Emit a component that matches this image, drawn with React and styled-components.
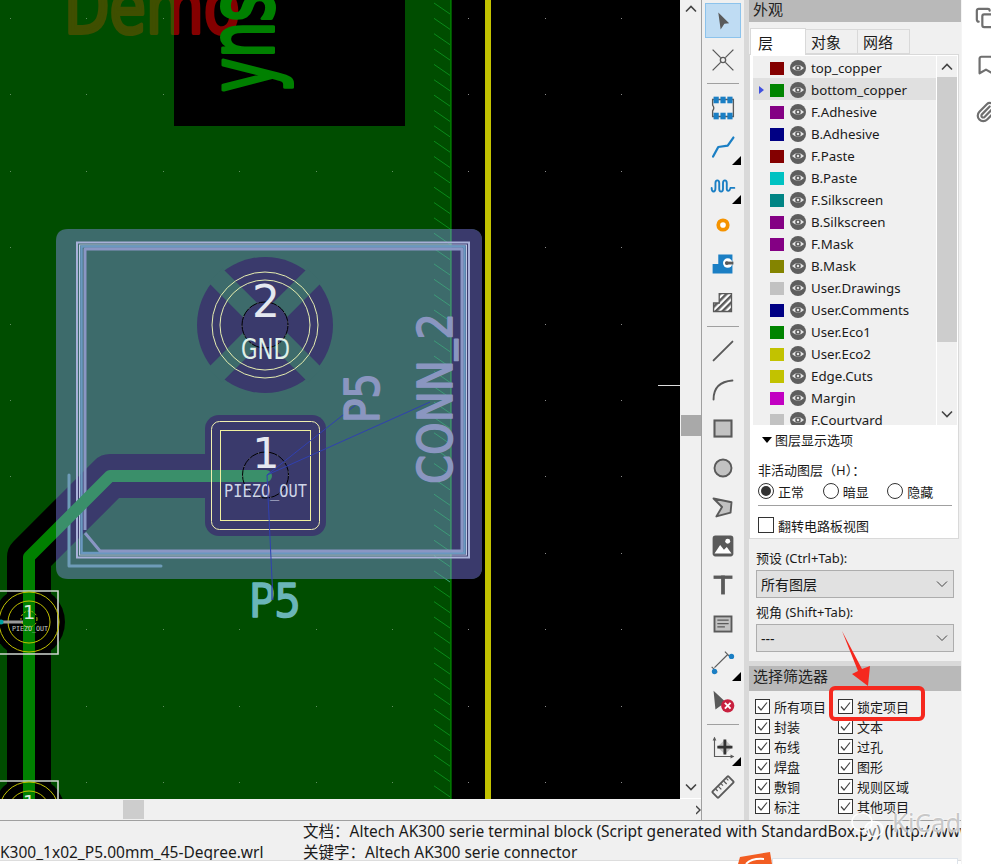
import React from 'react';
import styled, { createGlobalStyle } from 'styled-components';
import { Copy, Bookmark, Paperclip } from 'lucide-react';

const GlobalStyle = createGlobalStyle`
  html, body { margin: 0; padding: 0; background: #fff; }
  body { font-family: "Noto Sans", "Noto Sans CJK SC", sans-serif; color: #1a1a1a; }
`;

const Page = styled.div`
  position: relative;
  display: flex;
  width: 991px;
  height: 864px;
  overflow: hidden;
  background: #fff;
`;

const Main = styled.div`
  display: flex;
  flex-direction: column;
  width: 961px;
`;

const Workspace = styled.div`
  display: flex;
  height: 820px;
  background: #f0f0f0;
`;

const CanvasColumn = styled.div`
  display: flex;
  flex-direction: column;
  width: 701px;
`;

const CanvasRow = styled.div`
  display: flex;
  height: 799px;
`;

const Board = styled.svg`
  display: block;
  width: 680px;
  height: 799px;
`;

const BoardText = styled.text`
  font-family: "DejaVu Sans", sans-serif;
  stroke-linejoin: round;
`;

const BoardMono = styled.text`
  font-family: "DejaVu Sans Mono", monospace;
`;

const VScroll = styled.div`
  display: flex;
  flex-direction: column;
  align-items: center;
  width: 21px;
  background: #f0f0f0;
  border-bottom: 1px solid #fff;
`;

const ScrollArrow = styled.svg`
  display: block;
  flex: none;
  width: 12px;
  height: 8px;
  margin: ${p => p.$margin};
`;

const VThumb = styled.div`
  width: 20px;
  height: 21px;
  margin-top: 402px;
  margin-bottom: auto;
  background: #a9a9a9;
`;

const HScroll = styled.div`
  display: flex;
  align-items: center;
  justify-content: space-between;
  height: 21px;
  padding-left: 123px;
  box-sizing: border-box;
`;

const HThumb = styled.div`
  width: 21px;
  height: 19px;
  background: #cdcdcd;
`;

const SideArrow = styled.svg`
  display: block;
  width: 5px;
  height: 10px;
`;

const Toolbar = styled.div`
  display: flex;
  flex-direction: column;
  align-items: center;
  width: 43px;
  padding-top: 1px;
  box-sizing: border-box;
  border-left: 1px solid #a0a0a0;
  background: #f0f0f0;
`;

const ToolButton = styled.div`
  position: relative;
  display: flex;
  align-items: center;
  justify-content: center;
  flex: none;
  width: 36px;
  height: ${p => (p.$active ? 35 : 39)}px;
  margin: ${p => (p.$active ? '2px 0' : '0')};
  box-sizing: border-box;
  background: ${p => (p.$active ? '#bfdcf3' : 'transparent')};
  border: 1px solid ${p => (p.$active ? '#8cc3ec' : 'transparent')};
`;

const CornerMark = styled.span`
  position: absolute;
  right: -1px;
  bottom: 0;
  width: 0;
  height: 0;
  border-style: solid;
  border-width: 0 0 9px 9px;
  border-color: transparent transparent #000 transparent;
`;

const ToolDivider = styled.div`
  flex: none;
  width: 32px;
  height: ${p => p.$space}px;
  display: flex;
  align-items: center;
  &::after { content: ''; width: 100%; height: 1px; background: #a0a0a0; }
`;

const Strip = styled.div`
  width: 5px;
  background: #d9d9d9;
`;

const Panel = styled.div`
  display: flex;
  flex-direction: column;
  width: 212px;
  background: #f0f0f0;
`;

const PanelHeader = styled.div`
  flex: none;
  height: ${p => p.$height}px;
  line-height: ${p => p.$height - 4}px;
  padding-left: 4px;
  background: #b9b9b9;
  font-size: 15px;
  color: #222;
`;

const Tabs = styled.div`
  display: flex;
  align-items: flex-end;
  height: 32px;
  padding-left: 1px;
`;

const Tab = styled.div`
  box-sizing: border-box;
  display: flex;
  align-items: center;
  height: ${p => (p.$active ? 27 : 25)}px;
  width: ${p => p.$width}px;
  padding-left: ${p => (p.$active ? 7 : 5)}px;
  margin-bottom: ${p => (p.$active ? -1 : 0)}px;
  background: ${p => (p.$active ? '#fff' : '#f0f0f0')};
  border: 1px solid #d9d9d9;
  border-bottom: ${p => (p.$active ? 'none' : '1px solid #d9d9d9')};
  border-left: ${p => (p.$first ? '1px solid #d9d9d9' : 'none')};
  font-size: 15px;
  position: relative;
  z-index: ${p => (p.$active ? 1 : 0)};
`;

const LayerBox = styled.div`
  box-sizing: border-box;
  width: 210px;
  height: 485px;
  background: #fff;
  border: 1px solid #d9d9d9;
  padding: 1px 0 0 3px;
`;

const ListWrap = styled.div`
  display: flex;
  height: 369px;
`;

const LayerList = styled.div`
  width: 183px;
  background: #f0f0f0;
  overflow: hidden;
`;

const LayerRow = styled.div`
  display: flex;
  align-items: center;
  box-sizing: border-box;
  height: 22px;
  padding: 2px 0 0 6px;
  background: ${p => (p.$current ? '#e0e0e0' : 'transparent')};
`;

const Marker = styled.span`
  flex: none;
  width: 0;
  height: 0;
  margin-right: 6px;
  border-style: solid;
  border-width: 4.5px 0 4.5px 5px;
  border-color: transparent transparent transparent ${p => (p.$on ? '#4050e0' : 'transparent')};
`;

const Swatch = styled.span`
  flex: none;
  width: 14px;
  height: 13px;
  margin-right: 6px;
  background: ${p => p.$color};
`;

const LayerName = styled.span`
  margin-left: 5px;
  font-size: 13.3px;
  white-space: nowrap;
`;

const ListScroll = styled.div`
  display: flex;
  flex-direction: column;
  align-items: center;
  width: 20px;
  margin-left: 1px;
  background: #f0f0f0;
`;

const ListThumb = styled.div`
  width: 100%;
  height: 265px;
  margin-top: 6px;
  margin-bottom: auto;
  background: #cdcdcd;
`;

const OptionsHead = styled.div`
  display: flex;
  align-items: center;
  height: 29px;
  padding-left: 9px;
  font-size: 13px;
`;

const DownMark = styled.span`
  width: 0;
  height: 0;
  margin-right: 3px;
  border-style: solid;
  border-width: 6px 5.5px 0 5.5px;
  border-color: #000 transparent transparent transparent;
`;

const Options = styled.div`
  padding: 6px 3px 0 5px;
  font-size: 13px;
`;

const OptionLabel = styled.div`
  height: 20px;
  line-height: 20px;
`;

const RadioRow = styled.div`
  display: flex;
  align-items: center;
  height: 26px;
  border-bottom: 1px solid #a0a0a0;
  margin-right: 3px;
  padding-bottom: 3px;
  box-sizing: border-box;
`;

const RadioItem = styled.label`
  display: flex;
  align-items: center;
  gap: 4px;
  width: 66px;
`;

const RadioDot = styled.span`
  box-sizing: border-box;
  display: flex;
  align-items: center;
  justify-content: center;
  width: 16px;
  height: 16px;
  border: 1px solid #333;
  border-radius: 50%;
  &::after {
    content: '';
    width: 10px;
    height: 10px;
    border-radius: 50%;
    background: ${p => (p.$on ? '#333' : 'transparent')};
  }
`;

const FlipRow = styled.div`
  display: flex;
  align-items: center;
  gap: 4px;
  height: 28px;
  margin-top: 5px;
`;

const EmptyBox = styled.span`
  box-sizing: border-box;
  width: 16px;
  height: 16px;
  border: 1px solid #333;
  background: #fff;
`;

const PresetBlock = styled.div`
  padding: 9px 7px 0 7px;
  font-size: 13px;
`;

const PresetLabel = styled.div`
  height: 22px;
  line-height: 20px;
`;

const Select = styled.div`
  box-sizing: border-box;
  display: flex;
  align-items: center;
  justify-content: space-between;
  height: 28px;
  margin-bottom: 4px;
  padding: 0 5px 0 4px;
  background: #e1e1e1;
  border: 1px solid #adadad;
  font-size: 14px;
`;

const FilterStrip = styled.div`
  height: 5px;
  margin-top: 5px;
  background: #d9d9d9;
`;

const FilterGrid = styled.div`
  display: grid;
  grid-template-columns: 83px 1fr;
  grid-auto-rows: 20px;
  padding: 5px 0 0 6px;
`;

const FilterItem = styled.div`
  display: flex;
  align-items: center;
  gap: 4px;
  font-size: 13px;
  white-space: nowrap;
`;

const CheckBox = styled.span`
  box-sizing: border-box;
  display: flex;
  align-items: center;
  justify-content: center;
  flex: none;
  width: 15px;
  height: 15px;
  border: 1px solid #333;
  background: #fff;
`;

const StatusBar = styled.div`
  display: grid;
  grid-template-columns: 303px 1fr;
  box-sizing: border-box;
  height: 41px;
  border-top: 1px solid #a0a0a0;
  border-bottom: 1px solid #ddd;
  background: #f0f0f0;
  font-size: 15.5px;
  overflow: hidden;
`;

const FileName = styled.div`
  margin-top: 21px;
  line-height: 21px;
  white-space: nowrap;
  overflow: hidden;
`;

const StatusInfo = styled.div`
  min-width: 0;
  overflow: hidden;
`;

const StatusLine = styled.div`
  height: 21px;
  line-height: 21px;
  white-space: nowrap;
`;

const Rail = styled.div`
  display: flex;
  flex-direction: column;
  width: 30px;
  padding: 7px 0 0 13px;
  box-sizing: border-box;
  gap: 25px;
  overflow: hidden;
  border-left: 1px solid #f4f4f4;
  color: #6f6f6f;
`;

const RedBox = styled.div`
  position: absolute;
  left: 829px;
  top: 686px;
  width: 96px;
  height: 35px;
  box-sizing: border-box;
  border: 4px solid #f5281e;
  border-radius: 6px;
`;

const Overlay = styled.svg`
  position: absolute;
  left: 0;
  top: 0;
  width: 991px;
  height: 864px;
  pointer-events: none;
`;

const Watermark = styled.span`
  position: absolute;
  left: 892px;
  top: 805px;
  font-family: "Noto Sans", sans-serif;
  font-size: 25px;
  line-height: 34px;
  letter-spacing: 0.5px;
  color: rgba(185, 185, 185, 0.8);
  text-shadow: 0 0 2px #fff, 0 0 2px #fff;
`;

const ShareBox = styled.div`
  position: absolute;
  left: 772px;
  top: 858px;
  width: 186px;
  height: 10px;
  box-sizing: border-box;
  border: 1px solid #dde3ea;
  background: #fff;
`;

const IC = ({ children }) => (
  <svg width="36" height="36" viewBox="0 0 36 36">{children}</svg>
);

const GREY = '#5a5a5a';
const BLUE = '#1b7fc4';

const icons = {
  select: <path d="M13 9 L24.5 20.5 L19.5 21 L15.5 27 Z" fill={GREY} />,
  cross: (
    <g stroke={GREY} strokeWidth="1.4" fill="none">
      <path d="M7 7 L15.5 15.5 M29 7 L20.5 15.5 M7 29 L15.5 20.5 M29 29 L20.5 20.5" />
      <circle cx="18" cy="18" r="2.8" />
    </g>
  ),
  footprint: (
    <g>
      <path d="M7 9 H29 V27 H7 V21 Q9.5 18 7 15 Z" fill="none" stroke={GREY} strokeWidth="1.4" />
      <g fill={BLUE}>
        <rect x="8" y="6" width="5.5" height="7" /><rect x="15.3" y="6" width="5.5" height="7" /><rect x="22.6" y="6" width="5.5" height="7" />
        <rect x="8" y="23" width="5.5" height="7" /><rect x="15.3" y="23" width="5.5" height="7" /><rect x="22.6" y="23" width="5.5" height="7" />
      </g>
    </g>
  ),
  route: <path d="M7.5 28 L13 18 L23 16.5 L29 8" fill="none" stroke={BLUE} strokeWidth="2.4" strokeLinecap="round" strokeLinejoin="round" />,
  meander: <path d="M6 20 C6 25 10 25 10 20 V15 C10 11 14 11 14 15 V21 C14 25 18 25 18 21 V15 C18 11 22 11 22 15 V21 C22 24 25 24 26 20 H30" fill="none" stroke={BLUE} strokeWidth="2" strokeLinecap="round" />,
  via: <circle cx="18" cy="18" r="5" fill="#fff" stroke="#f59300" strokeWidth="4" />,
  zone: (
    <g>
      <path d="M7 28 V18 H13 V8 H28 V28 Z" fill={BLUE} />
      <circle cx="23" cy="17" r="5" fill="#fff" />
      <rect x="21" y="15.5" width="8" height="3" fill={GREY} />
      <circle cx="22" cy="17" r="2" fill={GREY} />
    </g>
  ),
  hatch: (
    <g>
      <defs>
        <pattern id="stripe" width="5" height="5" patternUnits="userSpaceOnUse" patternTransform="rotate(45)">
          <rect width="5" height="5" fill="#fff" />
          <rect width="2.6" height="5" fill={GREY} />
        </pattern>
      </defs>
      <path d="M8 27 V18 H14 V8 H27 V27 Z" fill="url(#stripe)" stroke={GREY} strokeWidth="1.4" />
    </g>
  ),
  line: <path d="M8 28 L28 8" stroke={GREY} strokeWidth="2" strokeLinecap="round" />,
  arc: <path d="M8 28 C8 16 15 9 28 8" fill="none" stroke={GREY} strokeWidth="2" strokeLinecap="round" />,
  rect: <rect x="9" y="9" width="18" height="17" fill="#c2c2c2" stroke={GREY} strokeWidth="2.2" />,
  circle: <circle cx="18" cy="18" r="9" fill="#c2c2c2" stroke={GREY} strokeWidth="2" />,
  polygon: <path d="M8 9 L27 13 L26 24 L11 28 L17 18 Z" fill="#c2c2c2" stroke={GREY} strokeWidth="2" strokeLinejoin="round" />,
  image: (
    <g>
      <rect x="7" y="7" width="22" height="22" rx="3" fill={GREY} />
      <circle cx="23" cy="13" r="2.6" fill="#fff" />
      <path d="M9 26 L15 17 L19 22 L22 19 L27 26 Z" fill="#fff" />
    </g>
  ),
  type: (
    <g fill={GREY}>
      <rect x="8" y="8" width="20" height="3.5" />
      <rect x="16" y="8" width="4" height="20" />
    </g>
  ),
  note: (
    <g>
      <rect x="9" y="10" width="18" height="16" fill="#c2c2c2" stroke={GREY} strokeWidth="2" />
      <path d="M12 14 H24 M12 17.5 H24 M12 21 H20" stroke={GREY} strokeWidth="1.3" />
    </g>
  ),
  dimension: (
    <g>
      <path d="M9 23 L23 9" stroke={GREY} strokeWidth="1.2" />
      <path d="M6 22 L12 28 M20 6 L26 12" stroke={GREY} strokeWidth="1.2" />
      <circle cx="27" cy="11" r="2.8" fill={BLUE} />
      <circle cx="9" cy="27" r="2.8" fill={BLUE} />
    </g>
  ),
  remove: (
    <g>
      <path d="M8 6 L23 20 L17 21 L10 26 Z" fill={GREY} />
      <circle cx="23" cy="22" r="7" fill="#c8213f" />
      <path d="M20 19 L26 25 M26 19 L20 25" stroke="#fff" strokeWidth="2" />
    </g>
  ),
  origin: (
    <g>
      <path d="M9 7 V27 H29" fill="none" stroke={GREY} strokeWidth="1.2" />
      <path d="M7 10 L9 6 L11 10 Z M26 25 L30 27 L26 29 Z" fill={GREY} />
      <path d="M20 9 L28 17 L20 25 L12 17 Z" fill="#c2c2c2" />
      <path d="M18.5 9 H21.5 V15.5 H28 V18.5 H21.5 V25 H18.5 V18.5 H12 V15.5 H18.5 Z" fill="#333" />
    </g>
  ),
  ruler: (
    <g transform="rotate(-45 18 18)">
      <rect x="6" y="13.5" width="24" height="9" fill="none" stroke={GREY} strokeWidth="2" rx="1" />
      <path d="M11 14 V17 M15 14 V18.5 M19 14 V17 M23 14 V18.5 M27 14 V17" stroke={GREY} strokeWidth="1.3" />
    </g>
  ),
};

const tools = [
  { icon: 'select', active: true },
  { icon: 'cross' },
  { divider: 9 },
  { icon: 'footprint' },
  { icon: 'route', corner: true },
  { icon: 'meander', corner: true },
  { icon: 'via' },
  { icon: 'zone' },
  { icon: 'hatch' },
  { divider: 9 },
  { icon: 'line' },
  { icon: 'arc' },
  { icon: 'rect' },
  { icon: 'circle' },
  { icon: 'polygon' },
  { icon: 'image' },
  { icon: 'type' },
  { icon: 'note' },
  { icon: 'dimension', corner: true },
  { icon: 'remove' },
  { divider: 7 },
  { icon: 'origin', corner: true },
  { icon: 'ruler' },
];

const layers = [
  ['top_copper', '#840000'],
  ['bottom_copper', '#008400'],
  ['F.Adhesive', '#840084'],
  ['B.Adhesive', '#000084'],
  ['F.Paste', '#840000'],
  ['B.Paste', '#00c2c2'],
  ['F.Silkscreen', '#008484'],
  ['B.Silkscreen', '#840084'],
  ['F.Mask', '#840084'],
  ['B.Mask', '#848400'],
  ['User.Drawings', '#c2c2c2'],
  ['User.Comments', '#000084'],
  ['User.Eco1', '#008400'],
  ['User.Eco2', '#c2c200'],
  ['Edge.Cuts', '#c2c200'],
  ['Margin', '#c200c2'],
  ['F.Courtyard', '#c2c2c2'],
];

const filters = [
  '所有项目', '锁定项目',
  '封装', '文本',
  '布线', '过孔',
  '焊盘', '图形',
  '敷铜', '规则区域',
  '标注', '其他项目',
];

const Eye = () => (
  <svg width="16" height="16" viewBox="0 0 16 16" style={{ flex: 'none' }}>
    <circle cx="8" cy="8" r="8" fill="#5e5e5e" />
    <path d="M2 8 Q8 2.2 14 8 Q8 13.8 2 8 Z" fill="#e6e6e6" />
    <circle cx="8" cy="8" r="2.8" fill="#5e5e5e" />
    <circle cx="8" cy="8" r="1.2" fill="#e6e6e6" />
  </svg>
);

const Tick = () => (
  <svg width="13" height="13" viewBox="0 0 13 13">
    <path d="M2 6.5 L5 10 L11 2.5" fill="none" stroke="#444" strokeWidth="1.2" />
  </svg>
);

const Chevron = ({ up, margin, size = 1.6 }) => (
  <ScrollArrow viewBox="0 0 12 8" $margin={margin}>
    <path d={up ? 'M1 6.5 L6 1.5 L11 6.5' : 'M1 1.5 L6 6.5 L11 1.5'} fill="none" stroke="#444" strokeWidth={size} />
  </ScrollArrow>
);

const gridDots = [];
for (let x = 10; x < 680; x += 76.4) {
  for (let y = 18; y < 799; y += 76.4) {
    gridDots.push([Math.round(x), Math.round(y)]);
  }
}

const hatchLines = [];
for (let y = 3; y < 799; y += 15.35) hatchLines.push(y);

const TRACE = 'M266 476 H110 L29 557 V800';
const HIGHLIGHT = 'M68 229 H470 Q482 229 482 241 V567 Q482 579 470 579 H68 Q56 579 56 567 V241 Q56 229 68 229 Z';

const SmallPad = ({ cy, label }) => (
  <g>
    <circle cx="29" cy={cy} r="36" fill="#000" />
    <rect x="23" y={cy - 36} width="12" height="72" fill="#008000" />
    <path d={`M0 ${cy - 31} H58 V${cy + 32} H0`} fill="none" stroke="#cfd6cf" strokeWidth="1.6" />
    <circle cx="29" cy={cy} r="30" fill="none" stroke="#c2c200" strokeWidth="1" />
    <circle cx="29" cy={cy} r="21" fill="none" stroke="#c2c200" strokeWidth="1" />
    <path d={`M0 ${cy} H23`} stroke="#9a9a9a" strokeWidth="3" />
    <circle cx="1" cy={cy} r="2.5" fill="#00a0a0" />
    <circle cx="29" cy={cy - 3} r="8" fill="none" stroke="#c2c200" strokeWidth="1" strokeDasharray="2 2" />
    <BoardText x="29" y={cy - 3} fontSize="20" textAnchor="middle" fill="#d8e8d8">1</BoardText>
    {label && (
      <BoardMono x="12" y={cy + 9} fontSize="7" textLength="36" lengthAdjust="spacingAndGlyphs" fill="#c8d0c8">PIEZO_OUT</BoardMono>
    )}
  </g>
);

const PcbCanvas = () => (
  <Board viewBox="0 0 680 799">
    <defs>
      <clipPath id="blackRect"><rect x="174" y="0" width="231" height="126" /></clipPath>
      <clipPath id="highlight"><path d={HIGHLIGHT} /></clipPath>
      <clipPath id="outside"><path d={`M0 0 H680 V799 H0 Z ${HIGHLIGHT}`} clipRule="evenodd" /></clipPath>
    </defs>
    <rect width="680" height="799" fill="#004d00" />
    <rect x="451" width="229" height="799" fill="#000" />
    <rect x="485" width="6" height="799" fill="#c2c200" />
    <rect x="450.5" width="1" height="799" fill="#00a000" />
    {hatchLines.map(y => (
      <path key={y} d={`M434 ${y} L450 ${y + 11}`} stroke="#0a8a1a" strokeWidth="1" />
    ))}
    <rect x="174" width="231" height="126" fill="#000" />
    {gridDots.map(([x, y]) => (
      <rect key={`${x}-${y}`} x={x} y={y} width="1" height="1" fill={x > 451 ? '#8a8a8a' : '#5f8f5f'} />
    ))}

    <BoardText x="64" y="33" fontSize="74" textLength="176" lengthAdjust="spacingAndGlyphs" fill="#3f4f00" stroke="#3f4f00" strokeWidth="4">Demo</BoardText>
    <g clipPath="url(#blackRect)">
      <rect x="174" width="231" height="126" fill="#000" />
      <BoardText x="64" y="33" fontSize="74" textLength="176" lengthAdjust="spacingAndGlyphs" fill="#840000" stroke="#840000" strokeWidth="4">Demo</BoardText>
    </g>
    <BoardText transform="translate(273 92) rotate(-90)" fontSize="91" textLength="100" lengthAdjust="spacingAndGlyphs" fill="#008000" stroke="#008000" strokeWidth="4">yns</BoardText>

    <path d={TRACE} fill="none" stroke="#000" strokeWidth="44" strokeLinejoin="round" />
    <path d={HIGHLIGHT} fill="#3d6b6b" />
    <path d="M451 229 H470 Q482 229 482 241 V567 Q482 579 470 579 H451 Z" fill="#3a3a6c" />
    {hatchLines.filter(y => y > 225 && y < 575).map(y => (
      <path key={y} d={`M434 ${y} L450 ${y + 11}`} stroke="#3d9a78" strokeWidth="1" />
    ))}
    <rect x="450.5" y="229" width="1" height="350" fill="#3fae6a" />
    <g clipPath="url(#highlight)">
      <path d={TRACE} fill="none" stroke="#3a3a6c" strokeWidth="44" strokeLinejoin="round" />
    </g>

    <path d="M69 475 V566 H161" fill="none" stroke="#6e9cb8" strokeWidth="3" strokeLinecap="round" strokeLinejoin="round" />
    <rect x="77" y="242.5" width="392" height="315" fill="none" stroke="#a8b0d8" strokeWidth="2" />
    <rect x="79.5" y="245" width="387" height="310" fill="none" stroke="#c0c8e4" strokeWidth="1" />
    <rect x="81.5" y="246.5" width="383" height="306.5" fill="none" stroke="#6a98c0" strokeWidth="2.5" />
    <path d="M85 530 V249 H462 V551 H100 L85 533" fill="none" stroke="#8a96c4" strokeWidth="3" strokeLinejoin="round" />

    <circle cx="265" cy="325" r="68" fill="#3a3a6c" />
    <g transform="rotate(45 265 325)" fill="#3d6b6b">
      <rect x="255" y="255" width="20" height="141" />
      <rect x="195" y="315" width="141" height="20" />
    </g>
    <circle cx="265" cy="325" r="23" fill="#3a3a6c" stroke="#000" strokeWidth="1" />
    <circle cx="265" cy="325" r="23" fill="none" stroke="#e8e8e8" strokeOpacity="0.5" strokeWidth="1" strokeDasharray="1 9" />
    <circle cx="265" cy="325" r="53" fill="none" stroke="#e6eeb0" strokeWidth="1" />
    <circle cx="265" cy="325" r="45" fill="none" stroke="#e6eeb0" strokeWidth="1" />
    <BoardText x="266" y="317" fontSize="44" textAnchor="middle" fill="#e4e8f0">2</BoardText>
    <BoardText x="241" y="359" fontSize="28" textLength="49" lengthAdjust="spacingAndGlyphs" fill="#dff0e8">GND</BoardText>

    <rect x="205" y="415" width="121" height="121" rx="14" fill="#3a3a6c" />
    <g clipPath="url(#highlight)">
      <path d={TRACE} fill="none" stroke="#3a8f6a" strokeWidth="12" strokeLinecap="round" strokeLinejoin="round" />
    </g>
    <g clipPath="url(#outside)">
      <path d={TRACE} fill="none" stroke="#008000" strokeWidth="12" strokeLinejoin="round" />
    </g>
    <rect x="211.5" y="421.5" width="108" height="108" rx="8" fill="none" stroke="#f0f0b0" strokeWidth="1" />
    <rect x="220.5" y="430.5" width="90" height="90" fill="none" stroke="#f0f0a0" strokeWidth="1" />
    <circle cx="265.5" cy="475" r="23" fill="none" stroke="#000" strokeWidth="1" />
    <circle cx="265.5" cy="475" r="23" fill="none" stroke="#e8e8e8" strokeOpacity="0.5" strokeWidth="1" strokeDasharray="1 9" />
    <BoardText x="266" y="468" fontSize="43" textAnchor="middle" fill="#e4e8f0">1</BoardText>
    <BoardMono x="224" y="497" fontSize="17" textLength="83" lengthAdjust="spacingAndGlyphs" fill="#cfd6e8">PIEZO_OUT</BoardMono>

    <path d="M267 475 L362 400 M267 475 L430 402 M267 475 L273 600" fill="none" stroke="#3040b0" strokeWidth="1" />

    <BoardText transform="translate(379 423) rotate(-90)" fontSize="48" textLength="50" lengthAdjust="spacingAndGlyphs" fill="#8a96c0" stroke="#8a96c0" strokeWidth="1.6">P5</BoardText>
    <BoardText transform="translate(452 484) rotate(-90)" fontSize="48" textLength="171" lengthAdjust="spacingAndGlyphs" fill="#8a96c0" stroke="#8a96c0" strokeWidth="1.6">CONN<tspan dy="-5">_</tspan><tspan dy="5">2</tspan></BoardText>
    <BoardText x="249" y="617" fontSize="46" textLength="52" lengthAdjust="spacingAndGlyphs" fill="#6ab5b8" stroke="#6ab5b8" strokeWidth="1.6">P5</BoardText>
    <path d="M272 585 V600" stroke="#1820a0" strokeWidth="1" />

    <SmallPad cy={622} label />
    <SmallPad cy={812} />
    <rect x="658" y="385" width="22" height="1" fill="#ddd" />
  </Board>
);

export default function App() {
  return (
    <Page>
      <GlobalStyle />
      <Main>
        <Workspace>
          <CanvasColumn>
            <CanvasRow>
              <PcbCanvas />
              <VScroll>
                <Chevron up margin="5px 0 0" />
                <VThumb />
                <Chevron margin="0 0 7px" />
              </VScroll>
            </CanvasRow>
            <HScroll>
              <HThumb />
              <SideArrow viewBox="0 0 5 10">
                <path d="M0 1 L4 5 L0 9" fill="none" stroke="#444" strokeWidth="1.4" />
              </SideArrow>
            </HScroll>
          </CanvasColumn>

          <Toolbar>
            {tools.map((tool, i) =>
              tool.divider ? (
                <ToolDivider key={i} $space={tool.divider} />
              ) : (
                <ToolButton key={i} $active={tool.active}>
                  <IC>{icons[tool.icon]}</IC>
                  {tool.corner && <CornerMark />}
                </ToolButton>
              )
            )}
          </Toolbar>
          <Strip />

          <Panel>
            <PanelHeader $height={22}>外观</PanelHeader>
            <Tabs>
              <Tab $active $first $width={56}>层</Tab>
              <Tab $width={52}>对象</Tab>
              <Tab $width={52}>网络</Tab>
            </Tabs>
            <LayerBox>
              <ListWrap>
                <LayerList>
                  {layers.map(([name, color], i) => (
                    <LayerRow key={name} $current={i === 1}>
                      <Marker $on={i === 1} />
                      <Swatch $color={color} />
                      <Eye />
                      <LayerName>{name}</LayerName>
                    </LayerRow>
                  ))}
                </LayerList>
                <ListScroll>
                  <Chevron up margin="7px 0 0" />
                  <ListThumb />
                  <Chevron margin="0 0 7px" />
                </ListScroll>
              </ListWrap>
              <OptionsHead><DownMark />图层显示选项</OptionsHead>
              <Options>
                <OptionLabel>非活动图层（H）：</OptionLabel>
                <RadioRow>
                  <RadioItem><RadioDot $on />正常</RadioItem>
                  <RadioItem><RadioDot />暗显</RadioItem>
                  <RadioItem><RadioDot />隐藏</RadioItem>
                </RadioRow>
                <FlipRow><EmptyBox />翻转电路板视图</FlipRow>
              </Options>
            </LayerBox>
            <PresetBlock>
              <PresetLabel>预设 (Ctrl+Tab):</PresetLabel>
              <Select>
                所有图层
                <ScrollArrow viewBox="0 0 12 8"><path d="M1 1.5 L6 6.5 L11 1.5" fill="none" stroke="#444" strokeWidth="1" /></ScrollArrow>
              </Select>
              <PresetLabel>视角 (Shift+Tab):</PresetLabel>
              <Select>
                ---
                <ScrollArrow viewBox="0 0 12 8"><path d="M1 1.5 L6 6.5 L11 1.5" fill="none" stroke="#444" strokeWidth="1" /></ScrollArrow>
              </Select>
            </PresetBlock>
            <FilterStrip />
            <PanelHeader $height={25}>选择筛选器</PanelHeader>
            <FilterGrid>
              {filters.map(label => (
                <FilterItem key={label}>
                  <CheckBox><Tick /></CheckBox>
                  {label}
                </FilterItem>
              ))}
            </FilterGrid>
          </Panel>
        </Workspace>

        <StatusBar>
          <FileName>K300_1x02_P5.00mm_45-Degree.wrl</FileName>
          <StatusInfo>
            <StatusLine>文档：Altech AK300 serie terminal block (Script generated with StandardBox.py) (http://www.altechcorp.com)</StatusLine>
            <StatusLine>关键字：Altech AK300 serie connector</StatusLine>
          </StatusInfo>
        </StatusBar>
      </Main>

      <Rail>
        <Copy size={22} strokeWidth={2.4} />
        <Bookmark size={22} strokeWidth={2.4} />
        <Paperclip size={22} strokeWidth={2.4} />
      </Rail>

      <RedBox />
      <Overlay viewBox="0 0 991 864">
        <path d="M842 631 L862 669 L870 666 L868 686 L852 674 L858 671 Z" fill="#f5281e" />
        <g fill="none" stroke="rgba(255,255,255,0.9)" strokeWidth="1.6">
          <ellipse cx="862" cy="822" rx="10" ry="9" />
          <ellipse cx="874" cy="829" rx="9" ry="7.5" fill="rgba(255,255,255,0.4)" />
        </g>
        <path d="M738 864 L740 857 L770 852 L772 864 Z" fill="#f25d22" />
        <path d="M746 864 Q752 858 764 859" fill="none" stroke="#fff" strokeWidth="2" />
      </Overlay>
      <Watermark>KiCad</Watermark>
      <ShareBox />
    </Page>
  );
}
